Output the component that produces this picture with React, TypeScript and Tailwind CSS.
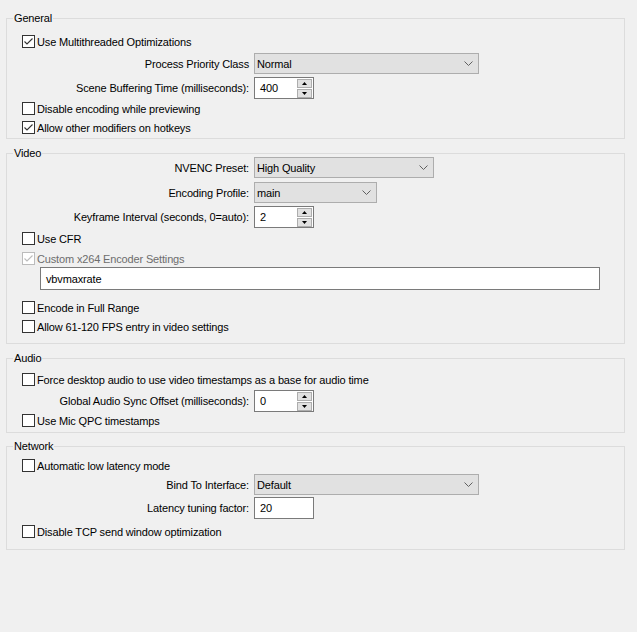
import React from "react";

const Check = ({ disabled }: { disabled?: boolean }) => (
  <svg width="11" height="11" viewBox="0 0 11 11">
    <polyline
      points="1.5,5.5 4,8 9.5,2.5"
      fill="none"
      stroke={disabled ? "#bcbcbc" : "#333333"}
      strokeWidth="1.1"
    />
  </svg>
);

const CheckRow = ({
  label,
  checked,
  disabled,
  cls,
}: {
  label: string;
  checked?: boolean;
  disabled?: boolean;
  cls: string;
}) => (
  <div className={`flex h-[17px] items-center pl-[15px] ${cls}`}>
    <span
      className={`flex h-[13px] w-[13px] shrink-0 items-center justify-center border bg-white ${
        disabled ? "border-[#bcbcbc]" : "border-[#333333]"
      }`}
    >
      {checked && <Check disabled={disabled} />}
    </span>
    <span className={`ml-[2px] whitespace-nowrap ${disabled ? "text-[#6d6d6d]" : "text-black"}`}>{label}</span>
  </div>
);

const Chevron = () => (
  <svg width="9" height="5" viewBox="0 0 9 5">
    <polyline points="0.5,0.5 4.5,4.5 8.5,0.5" fill="none" stroke="#606060" strokeWidth="1" />
  </svg>
);

const Combo = ({ value, w }: { value: string; w: string }) => (
  <div className={`flex h-[21px] items-center justify-between border border-[#adadad] bg-[#e1e1e1] pl-[2px] pr-[5px] ${w}`}>
    <span>{value}</span>
    <Chevron />
  </div>
);

const Tri = ({ up }: { up?: boolean }) => (
  <svg width="5" height="3" viewBox="0 0 5 3">
    <polygon points={up ? "0,3 5,3 2.5,0" : "0,0 5,0 2.5,3"} fill="#000" />
  </svg>
);

const Spin = ({ value }: { value: string }) => (
  <div className="flex h-[22px] w-[60px] border border-[#7a7a7a] bg-white">
    <div className="flex flex-1 items-center pl-[5px]">{value}</div>
    <div className="flex flex-col gap-[1px] pt-[1px] pr-[1px]">
      <div className="flex h-[9px] w-[15px] items-center justify-center border border-[#adadad] bg-[#e1e1e1]">
        <Tri up />
      </div>
      <div className="flex h-[9px] w-[15px] items-center justify-center border border-[#adadad] bg-[#e1e1e1]">
        <Tri />
      </div>
    </div>
  </div>
);

const TextBox = ({ value, w }: { value: string; w: string }) => (
  <div className={`flex h-[22px] items-center border border-[#7a7a7a] bg-white pl-[5px] ${w}`}>{value}</div>
);

const LabelRow = ({ label, cls, children }: { label: string; cls: string; children: React.ReactNode }) => (
  <div className={`flex items-center ${cls}`}>
    <div className="w-[247px] shrink-0 whitespace-nowrap pr-[5px] text-right">{label}</div>
    {children}
  </div>
);

const Group = ({ title, cls, children }: { title: string; cls: string; children: React.ReactNode }) => (
  <div className={`relative w-[619px] border border-[#dcdcdc] ${cls}`}>
    <span className="absolute -top-[9px] left-[6px] bg-[#f0f0f0] px-[1px] leading-[16px]">{title}</span>
    {children}
  </div>
);

export default function App() {
  return (
    <div className="min-h-screen w-full bg-[#f0f0f0] pl-[6px] pt-[18px] font-['Liberation_Sans',Arial,sans-serif] text-[11px] leading-[16px] tracking-[-0.15px] text-black">
      <Group title="General" cls="pt-[14px] pb-[2px]">
        <CheckRow label="Use Multithreaded Optimizations" checked cls="" />
        <LabelRow label="Process Priority Class" cls="mt-[3px]">
          <Combo value="Normal" w="w-[225px]" />
        </LabelRow>
        <LabelRow label="Scene Buffering Time (milliseconds):" cls="mt-[3px]">
          <Spin value="400" />
        </LabelRow>
        <CheckRow label="Disable encoding while previewing" cls="mt-[1px]" />
        <CheckRow label="Allow other modifiers on hotkeys" checked cls="mt-[2px]" />
      </Group>

      <Group title="Video" cls="mt-[14px] pt-[3px] pb-[8px]">
        <LabelRow label="NVENC Preset:" cls="">
          <Combo value="High Quality" w="w-[180px]" />
        </LabelRow>
        <LabelRow label="Encoding Profile:" cls="mt-[4px]">
          <Combo value="main" w="w-[123px]" />
        </LabelRow>
        <LabelRow label="Keyframe Interval (seconds, 0=auto):" cls="mt-[3px]">
          <Spin value="2" />
        </LabelRow>
        <CheckRow label="Use CFR" cls="mt-[2px]" />
        <CheckRow label="Custom x264 Encoder Settings" checked disabled cls="mt-[3px]" />
        <div className="pl-[33px]">
          <TextBox value="vbvmaxrate" w="w-[560px] h-[23px]" />
        </div>
        <CheckRow label="Encode in Full Range" cls="mt-[9px]" />
        <CheckRow label="Allow 61-120 FPS entry in video settings" cls="mt-[2px]" />
      </Group>

      <Group title="Audio" cls="mt-[14px] pt-[12px] pb-[3px]">
        <CheckRow label="Force desktop audio to use video timestamps as a base for audio time" cls="" />
        <LabelRow label="Global Audio Sync Offset (milliseconds):" cls="mt-[2px]">
          <Spin value="0" />
        </LabelRow>
        <CheckRow label="Use Mic QPC timestamps" cls="" />
      </Group>

      <Group title="Network" cls="mt-[13px] pt-[10px] pb-[9px]">
        <CheckRow label="Automatic low latency mode" cls="" />
        <LabelRow label="Bind To Interface:" cls="">
          <Combo value="Default" w="w-[225px]" />
        </LabelRow>
        <LabelRow label="Latency tuning factor:" cls="mt-[2px]">
          <TextBox value="20" w="w-[60px]" />
        </LabelRow>
        <CheckRow label="Disable TCP send window optimization" cls="mt-[4px]" />
      </Group>
    </div>
  );
}
